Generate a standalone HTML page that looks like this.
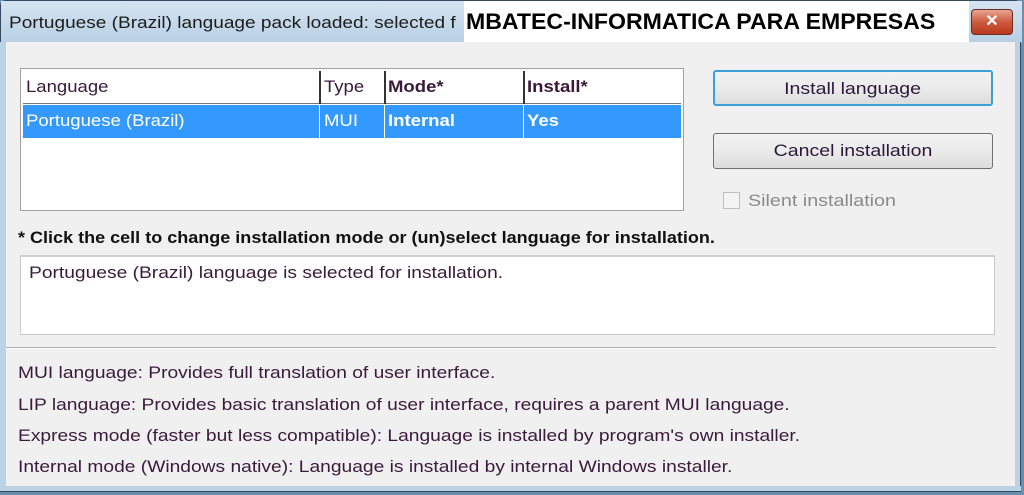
<!DOCTYPE html>
<html><head><meta charset="utf-8"><style>
*{margin:0;padding:0;box-sizing:border-box}
body{width:1024px;height:495px;overflow:hidden;background:#6a8fae;font-family:"Liberation Sans",sans-serif;color:#3a1a3a;position:relative}
.win{position:absolute;left:0;top:0;width:1021px;height:492px;background:#bcd3e6;border:1px solid #34495e;border-radius:6px 6px 0 0}
.title{position:absolute;left:0;top:0;width:1021px;height:42px;background:linear-gradient(#d4e4f2,#b8cfe4);overflow:hidden}
.t1{position:absolute;left:8px;top:12px;font-size:17px;color:#1c1c1c;white-space:nowrap;transform:scaleX(1.12);transform-origin:left}
.wb{position:absolute;left:463px;top:0;width:505px;height:42px;background:#fff}
.wb span{position:absolute;left:2px;top:8px;font-size:22px;font-weight:bold;color:#000;transform:scaleX(1.05);transform-origin:left;white-space:nowrap}
.close{position:absolute;left:970px;top:8px;width:42px;height:26px;border:1px solid #6b2a20;border-radius:4px;background:linear-gradient(#e9a592,#cd5a3e 50%,#b8381e);color:#fff;font-weight:bold;font-size:16px;text-align:center;line-height:23px}
.body{position:absolute;left:6px;top:42px;width:1009px;height:444px;background:#f0f0f0}
.list{position:absolute;left:20px;top:68px;width:664px;height:143px;background:#fff;border:1px solid #a0a0a0}
.hd,.row{position:absolute;left:2px;width:658px;font-size:17px}
.hd{top:2px;height:33px;border-bottom:1px solid #777;background:#fff}
.row{top:36px;height:33px;background:#3399ff;color:#fff}
.c{position:absolute;top:6px;white-space:nowrap;transform:scaleX(1.09);transform-origin:left}
.sep{position:absolute;top:0;width:2px;height:33px;background:#333}
.btn{position:absolute;left:713px;width:280px;height:36px;border:1px solid #707070;border-radius:3px;background:linear-gradient(#f2f2f2,#ebebeb 50%,#dcdcdc);font-size:17px;text-align:center;line-height:34px;color:#2a1a3a}
.btn span{display:inline-block;transform:scaleX(1.15)}
.b1{top:70px;border:2px solid #3c9fd8}
.b2{top:133px}
.txt{position:absolute;white-space:nowrap;font-size:17px;transform:scaleX(1.13);transform-origin:left}
.box{position:absolute;left:20px;top:255px;width:975px;height:80px;background:#fff;border:1px solid #c8c8c8;border-top:2px solid #d0d0d0}
</style></head><body>
<div class="win">
<div class="title"><div class="t1">Portuguese (Brazil) language pack loaded: selected f</div></div>
<div class="wb"><span>MBATEC-INFORMATICA PARA EMPRESAS</span></div>
<div class="close">✕</div>
</div>
<div class="body"></div>
<div style="position:absolute;left:0;top:42px;width:4px;height:450px;background:#bcd3e6"></div>
<div style="position:absolute;left:1015px;top:42px;width:6px;height:450px;background:#bcd3e6;border-right:1px solid #34495e"></div>
<div style="position:absolute;left:0;top:486px;width:1021px;height:6px;background:#bcd3e6;border-bottom:1px solid #34495e"></div>
<div class="list">
 <div class="hd">
  <span class="c" style="left:3px">Language</span>
  <div class="sep" style="left:296px"></div><span class="c" style="left:301px">Type</span>
  <div class="sep" style="left:361px"></div><span class="c" style="left:365px;font-weight:bold">Mode*</span>
  <div class="sep" style="left:500px"></div><span class="c" style="left:504px;font-weight:bold">Install*</span>
 </div>
 <div class="row">
  <span class="c" style="left:3px">Portuguese (Brazil)</span>
  <div class="sep" style="left:296px;background:#fff;width:1px"></div><span class="c" style="left:301px">MUI</span>
  <div class="sep" style="left:361px;background:#fff;width:1px"></div><span class="c" style="left:365px;font-weight:bold">Internal</span>
  <div class="sep" style="left:500px;background:#fff;width:1px"></div><span class="c" style="left:504px;font-weight:bold">Yes</span>
 </div>
</div>
<div class="btn b1"><span>Install language</span></div>
<div class="btn b2"><span>Cancel installation</span></div>
<div style="position:absolute;left:723px;top:192px;width:17px;height:17px;border:1px solid #c0c0c0;background:#f4f4f4"></div>
<div class="txt" style="left:748px;top:191px;color:#8a8a8a;transform:scaleX(1.16)">Silent installation</div>
<div class="txt" style="left:18px;top:228px;font-weight:bold;color:#111;transform:scaleX(1.06)">* Click the cell to change installation mode or (un)select language for installation.</div>
<div class="box"><div class="txt" style="left:8px;top:6px">Portuguese (Brazil) language is selected for installation.</div></div>
<div style="position:absolute;left:6px;top:347px;width:990px;height:2px;background:#b0b0b0;border-bottom:1px solid #fff"></div>
<div class="txt" style="left:18px;top:363px">MUI language: Provides full translation of user interface.</div>
<div class="txt" style="left:18px;top:395px">LIP language: Provides basic translation of user interface, requires a parent MUI language.</div>
<div class="txt" style="left:18px;top:426px">Express mode (faster but less compatible): Language is installed by program's own installer.</div>
<div class="txt" style="left:18px;top:457px">Internal mode (Windows native): Language is installed by internal Windows installer.</div>
</body></html>
